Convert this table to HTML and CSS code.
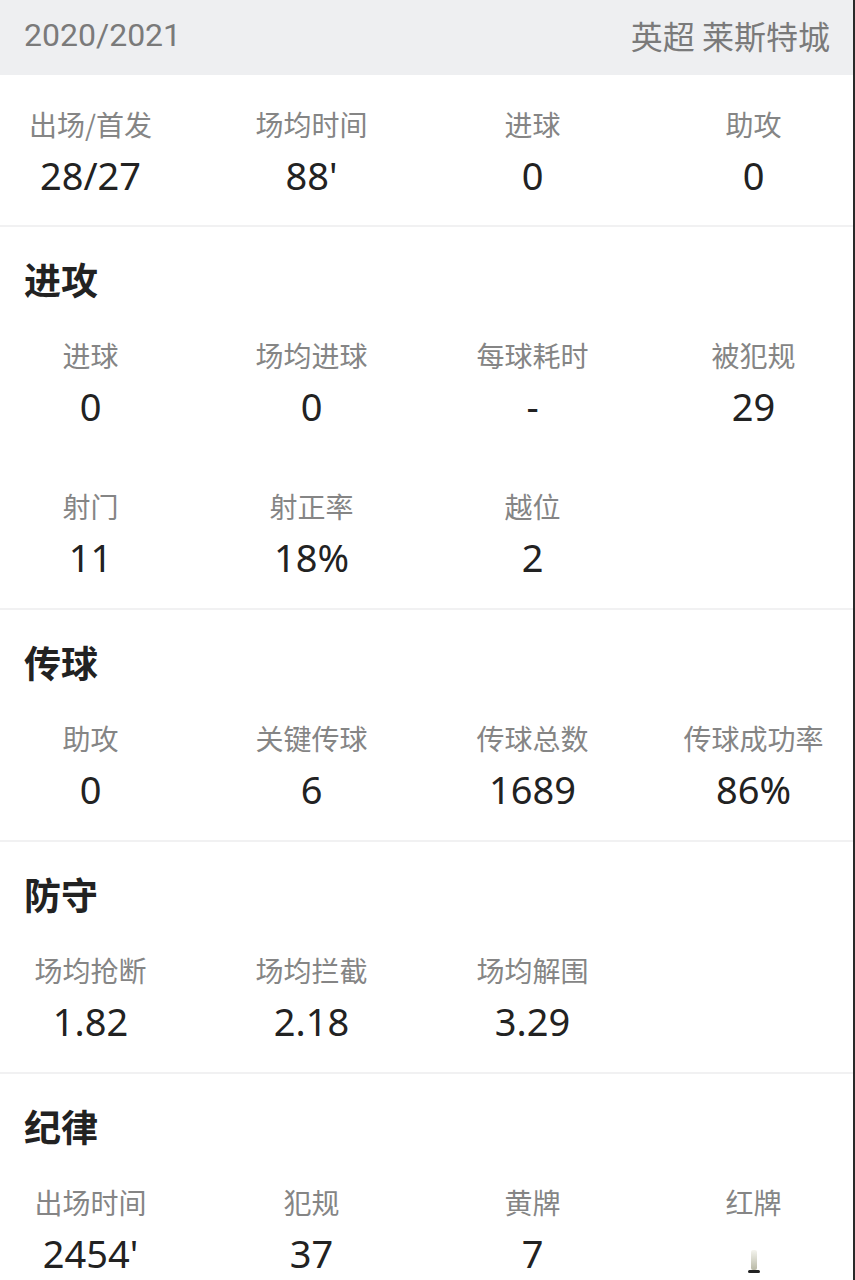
FILE: index.html
```html
<!DOCTYPE html>
<html lang="zh-CN">
<head>
<meta charset="utf-8">
<title>球员数据 2020/2021</title>
<link rel="stylesheet" href="styles.css">
</head>
<body>
<div class="page">
  <header class="season-bar">
    <span class="season">2020/2021</span>
    <span class="team">英超 莱斯特城</span>
  </header>

  <section class="block summary">
    <div class="grid">
      <div class="cell"><span class="label">出场/首发</span><span class="value">28/27</span></div>
      <div class="cell"><span class="label">场均时间</span><span class="value">88'</span></div>
      <div class="cell"><span class="label">进球</span><span class="value">0</span></div>
      <div class="cell"><span class="label">助攻</span><span class="value">0</span></div>
    </div>
  </section>

  <section class="block">
    <h2 class="title">进攻</h2>
    <div class="grid">
      <div class="cell"><span class="label">进球</span><span class="value">0</span></div>
      <div class="cell"><span class="label">场均进球</span><span class="value">0</span></div>
      <div class="cell"><span class="label">每球耗时</span><span class="value">-</span></div>
      <div class="cell"><span class="label">被犯规</span><span class="value">29</span></div>
      <div class="cell"><span class="label">射门</span><span class="value">11</span></div>
      <div class="cell"><span class="label">射正率</span><span class="value">18%</span></div>
      <div class="cell"><span class="label">越位</span><span class="value">2</span></div>
    </div>
  </section>

  <section class="block">
    <h2 class="title">传球</h2>
    <div class="grid">
      <div class="cell"><span class="label">助攻</span><span class="value">0</span></div>
      <div class="cell"><span class="label">关键传球</span><span class="value">6</span></div>
      <div class="cell"><span class="label">传球总数</span><span class="value">1689</span></div>
      <div class="cell"><span class="label">传球成功率</span><span class="value">86%</span></div>
    </div>
  </section>

  <section class="block">
    <h2 class="title">防守</h2>
    <div class="grid">
      <div class="cell"><span class="label">场均抢断</span><span class="value">1.82</span></div>
      <div class="cell"><span class="label">场均拦截</span><span class="value">2.18</span></div>
      <div class="cell"><span class="label">场均解围</span><span class="value">3.29</span></div>
    </div>
  </section>

  <section class="block">
    <h2 class="title">纪律</h2>
    <div class="grid">
      <div class="cell"><span class="label">出场时间</span><span class="value">2454'</span></div>
      <div class="cell"><span class="label">犯规</span><span class="value">37</span></div>
      <div class="cell"><span class="label">黄牌</span><span class="value">7</span></div>
      <div class="cell"><span class="label">红牌</span><span class="value"><span class="smudge"></span></span></div>
    </div>
  </section>
</div>
</body>
</html>
```

FILE: styles.css
```css
html, body {
  margin: 0;
  padding: 0;
  background: #ffffff;
}

body {
  font-family: "Noto Sans", "Noto Sans CJK SC", sans-serif;
  overflow: hidden;
}

.page {
  width: 853px;
  height: 1280px;
  border-right: 2px solid #2a2a2a;
  overflow: hidden;
  background: #ffffff;
}

.season-bar {
  height: 75px;
  background: #eeeff1;
  display: flex;
  align-items: center;
  justify-content: space-between;
  padding: 0 23px 0 24px;
  box-sizing: border-box;
  color: #7a7a7a;
  font-family: Roboto, "Noto Sans CJK SC", sans-serif;
  font-size: 32px;
  line-height: 1;
}

.season {
  padding-bottom: 6px;
}

.team {
  font-family: "Noto Sans CJK SC", sans-serif;
  font-size: 32px;
  padding-bottom: 6px;
}

.block {
  padding: 27px 0 20px;
  border-bottom: 2px solid #f1f1f2;
}

.summary {
  padding: 29px 0 19px;
}

.title {
  margin: 0 0 31px 24px;
  font-family: "Noto Sans CJK SC", sans-serif;
  font-size: 37px;
  font-weight: 700;
  line-height: 50px;
  color: #222222;
}

.grid {
  display: grid;
  grid-template-columns: repeat(4, 221px);
  row-gap: 49px;
  margin-left: -20px;
}

.cell {
  display: flex;
  flex-direction: column;
  align-items: center;
}

.label {
  font-family: "Noto Sans CJK SC", sans-serif;
  font-size: 28px;
  line-height: 40px;
  color: #858585;
  white-space: nowrap;
}

.value {
  font-family: "Noto Sans", "Noto Sans CJK SC", sans-serif;
  font-size: 38px;
  line-height: 62px;
  color: #222222;
  white-space: nowrap;
  display: flex;
  align-items: center;
  justify-content: center;
  height: 62px;
}

.smudge {
  display: block;
  position: relative;
  width: 6px;
  height: 20px;
  margin-top: 14px;
  background: linear-gradient(#f4f4ee, #b9b9a6);
  border-radius: 2px;
}

.smudge::after {
  content: "";
  position: absolute;
  left: -3px;
  bottom: -3px;
  width: 12px;
  height: 3px;
  border-radius: 2px;
  background: #222222;
}
```
